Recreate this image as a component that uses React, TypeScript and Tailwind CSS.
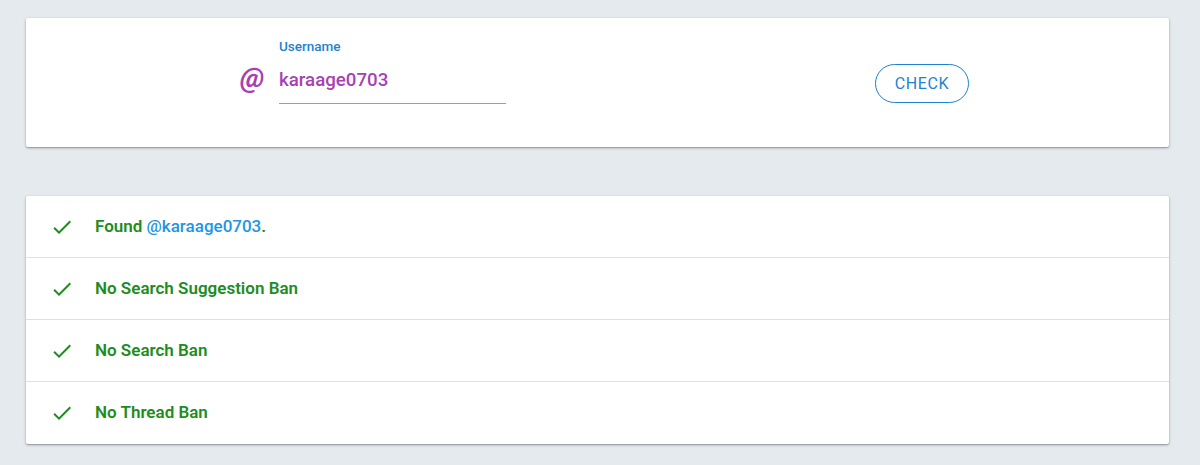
import React from 'react';

const rows = ['found', 'No Search Suggestion Ban', 'No Search Ban', 'No Thread Ban'];

const CheckIcon: React.FC = () => (
  <svg width="24" height="24" viewBox="0 0 24 24" className="shrink-0">
    <path d="M9 16.17L4.83 12l-1.42 1.41L9 19 21 7l-1.41-1.41z" fill="#1e8c1e" />
  </svg>
);

const App: React.FC = () => {
  return (
    <div className="w-[1200px] h-[465px] bg-[#e5eaee] pt-[18px] overflow-hidden" style={{ fontFamily: 'Roboto, "Liberation Sans", sans-serif' }}>
      <div className="ml-[26px] w-[1143px] h-[129px] bg-white rounded-[2px] shadow-[0_1px_3px_rgba(0,0,0,0.3),0_1px_1px_rgba(0,0,0,0.14)] flex items-center">
        <div className="ml-[214px] flex items-end mt-[-24px]">
          <span className="text-[28px] leading-none font-bold italic text-[#a93fb5] mb-[12px] w-[39px]">@</span>
          <div className="flex flex-col w-[227px]">
            <label className="text-[13.5px] leading-[16px] font-medium text-[#1f82d0]">Username</label>
            <div className="mt-[14px] pb-[11px] border-b border-[#9e9e9e] text-[18.7px] leading-[24px] font-medium text-[#a93fb5]">
              karaage0703
            </div>
          </div>
        </div>
        <button className="ml-[369px] mt-[2px] w-[94px] h-[39px] rounded-full border border-[#1f82d0] text-[#1f82d0] text-[16px] tracking-[0.6px] font-normal">
          CHECK
        </button>
      </div>

      <div className="ml-[26px] mt-[49px] w-[1143px] bg-white rounded-[2px] shadow-[0_1px_3px_rgba(0,0,0,0.3),0_1px_1px_rgba(0,0,0,0.14)]">
        {rows.map((r, i) => (
          <div key={r} className={`h-[62px] flex items-center pl-[24px] ${i < rows.length - 1 ? 'border-b border-[#e0e0e0]' : ''}`}>
            <CheckIcon />
            <span className="ml-[21px] text-[17px] font-semibold text-[#1e8c1e]">
              {r === 'found' ? (
                <>Found <span className="text-[#2196e3] font-medium">@karaage0703</span>.</>
              ) : r}
            </span>
          </div>
        ))}
      </div>
    </div>
  );
};

export default App;
